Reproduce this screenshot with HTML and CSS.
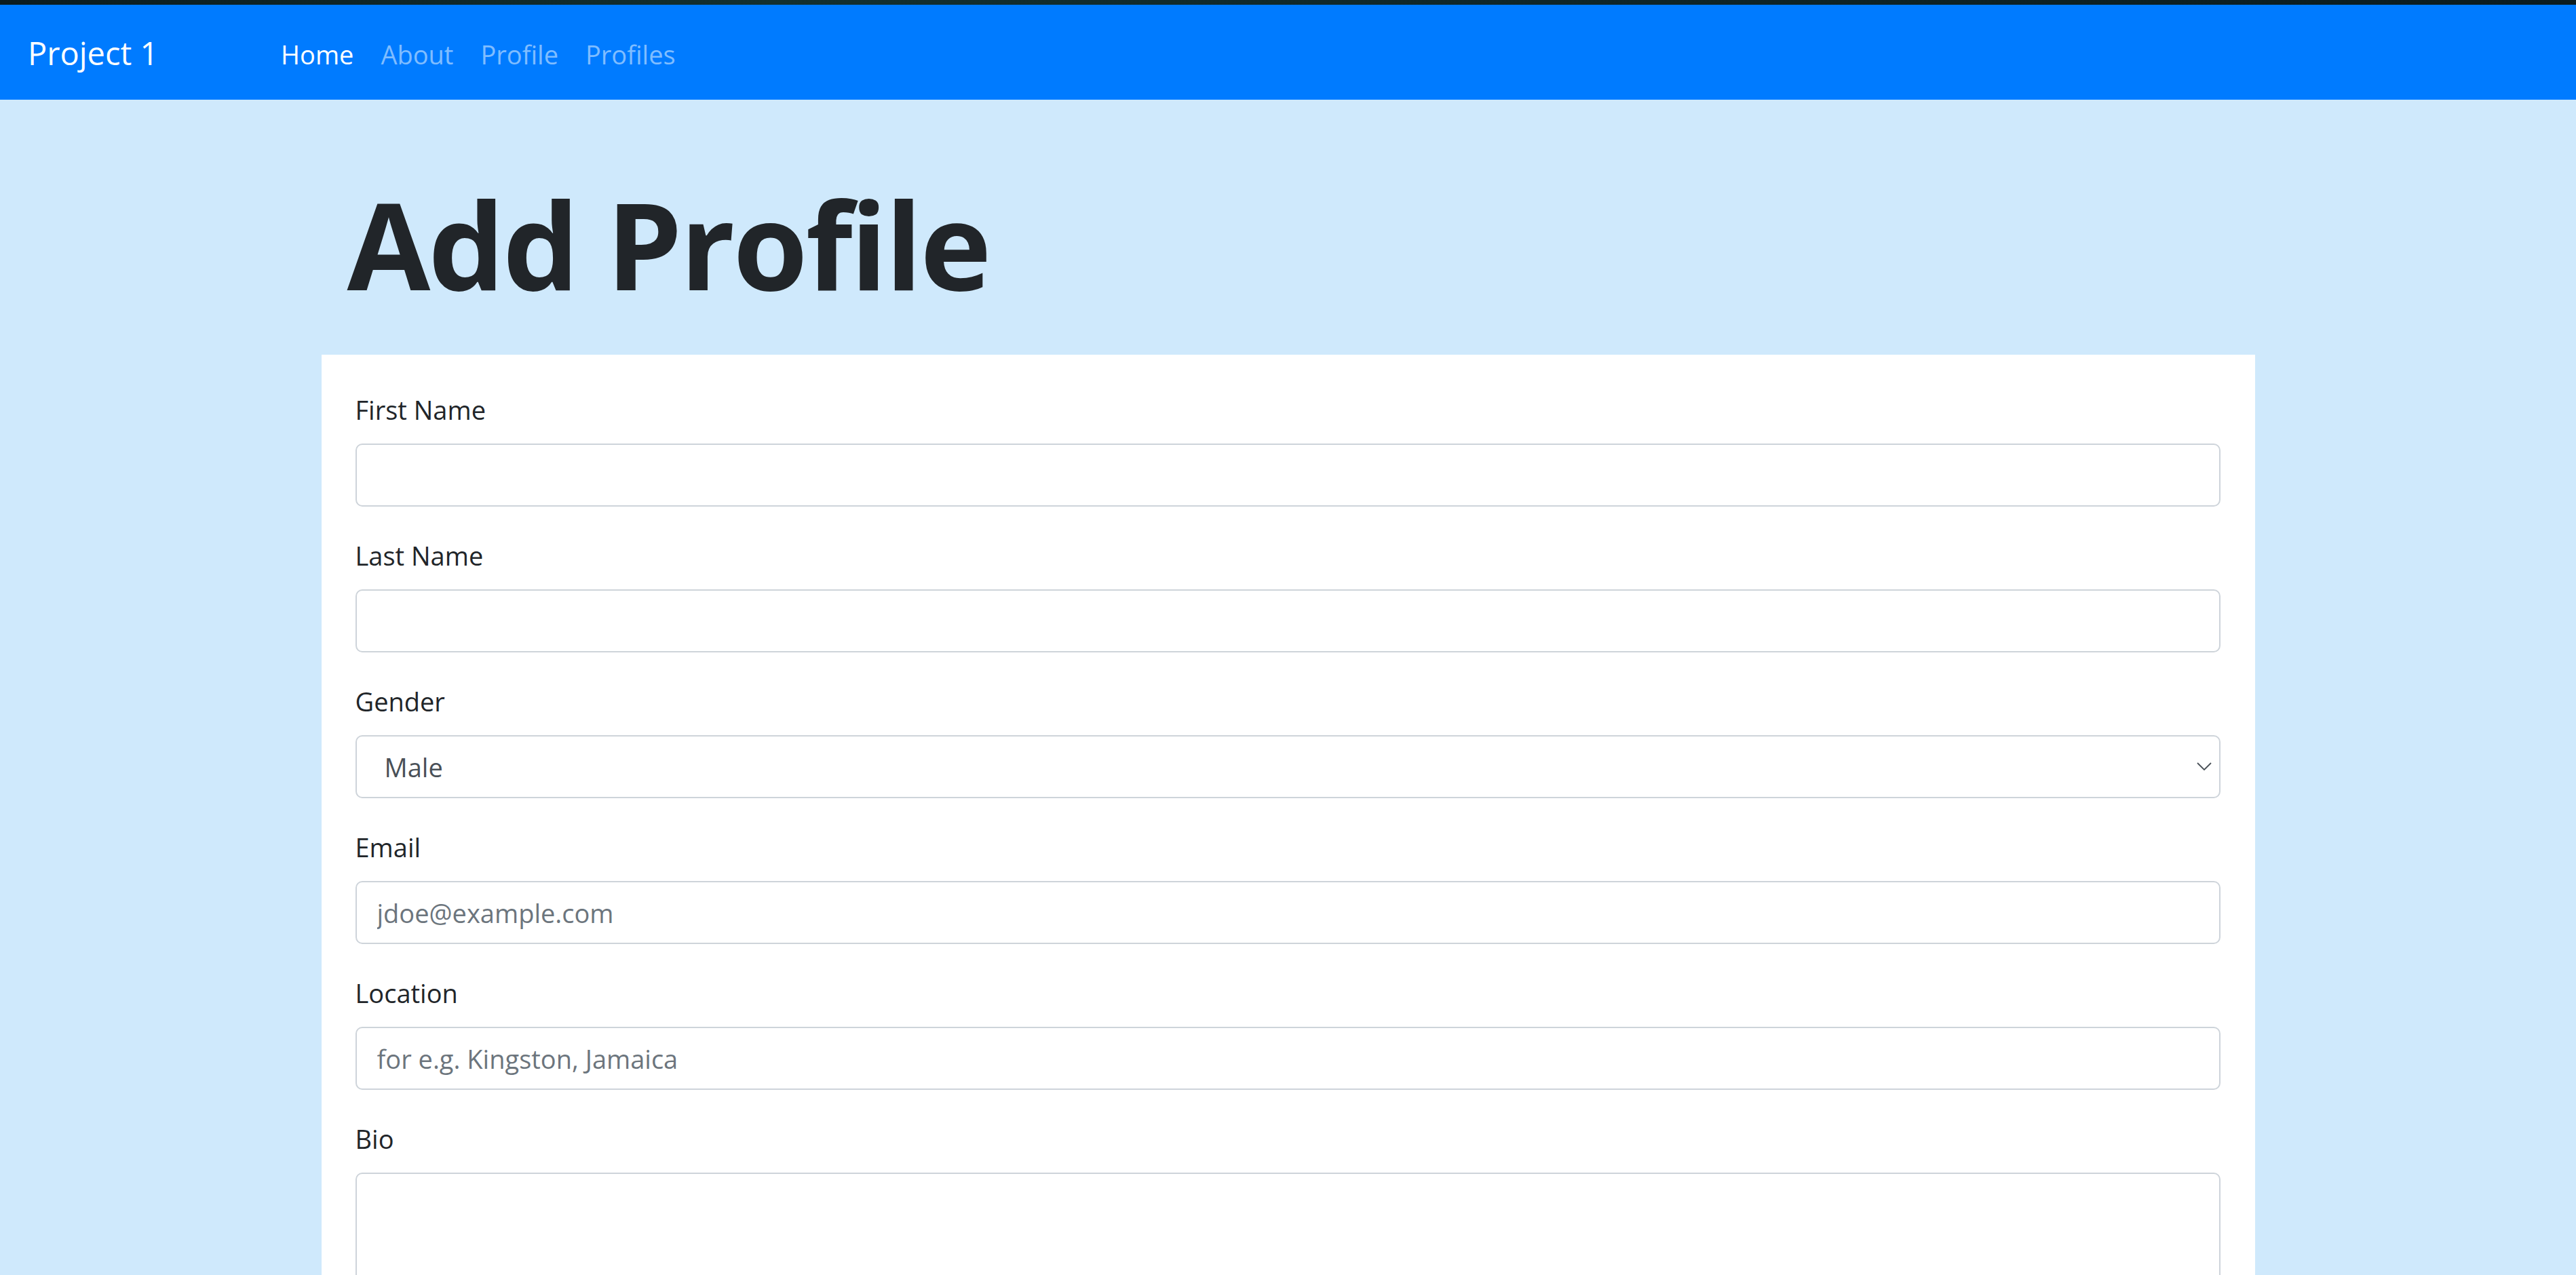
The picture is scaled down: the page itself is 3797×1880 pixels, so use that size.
FILE: index.html
```html
<!DOCTYPE html>
<html lang="en">
<head>
<meta charset="utf-8">
<title>Add Profile</title>
<link rel="stylesheet" href="styles.css">
</head>
<body>
<div class="topstrip"></div>
<nav class="navbar">
  <a class="brand" href="#">Project 1</a>
  <ul class="nav">
    <li><a class="nav-link active" href="#">Home</a></li>
    <li><a class="nav-link" href="#">About</a></li>
    <li><a class="nav-link" href="#">Profile</a></li>
    <li><a class="nav-link" href="#">Profiles</a></li>
  </ul>
</nav>
<main class="container">
  <h1 class="title">Add Profile</h1>
  <form class="card">
    <div class="group">
      <label class="label" for="fname">First Name</label>
      <input class="control" id="fname" type="text">
    </div>
    <div class="group">
      <label class="label" for="lname">Last Name</label>
      <input class="control" id="lname" type="text">
    </div>
    <div class="group">
      <label class="label" for="gender">Gender</label>
      <div class="select-wrap">
        <select class="control select" id="gender">
          <option>Male</option>
          <option>Female</option>
        </select>
        <svg class="chevron" width="22" height="12" viewBox="0 0 22 12" aria-hidden="true"><path d="M1 1 L11 11 L21 1" fill="none" stroke="#495057" stroke-width="1.8"/></svg>
      </div>
    </div>
    <div class="group">
      <label class="label" for="email">Email</label>
      <input class="control" id="email" type="email" placeholder="jdoe@example.com">
    </div>
    <div class="group">
      <label class="label" for="loc">Location</label>
      <input class="control" id="loc" type="text" placeholder="for e.g. Kingston, Jamaica">
    </div>
    <div class="group">
      <label class="label" for="bio">Bio</label>
      <textarea class="control textarea" id="bio"></textarea>
    </div>
  </form>
</main>
</body>
</html>
```
FILE: styles.css
```css
* { box-sizing: border-box; }
html, body {
  margin: 0;
  padding: 0;
}
body {
  background: #cfe9fc;
  font-family: "Open Sans", "Noto Sans", sans-serif;
  color: #212529;
}
.topstrip {
  height: 7px;
  background: linear-gradient(90deg, #0b1c1f, #13302f 30%, #0f2628 60%, #0b1c1f);
}
.navbar {
  height: 140px;
  background: #007bff;
  display: flex;
  align-items: center;
  padding: 5px 0 0 41px;
}
.brand {
  width: 353px;
  font-size: 47px;
  color: #fff;
  text-decoration: none;
  line-height: 1;
  padding-bottom: 2px;
}
.nav {
  display: flex;
  list-style: none;
  margin: 0;
  padding: 0;
}
.nav-link {
  display: block;
  padding: 0 20px;
  font-size: 38px;
  line-height: 1;
  color: rgba(255, 255, 255, 0.5);
  text-decoration: none;
}
.nav-link.active { color: #fff; }
.container {
  width: 2850px;
  margin: 0 auto;
}
.title {
  margin: 104px 0 56px;
  padding-left: 38px;
  font-size: 178px;
  line-height: 216px;
  font-weight: 700;
  color: #212529;
  letter-spacing: -3px;
}
.card {
  background: #fff;
  padding: 53px 51px 60px 50px;
  margin: 0;
}
.group {
  margin-bottom: 44px;
}
.label {
  display: block;
  font-size: 38px;
  line-height: 57px;
  margin-bottom: 21px;
  color: #212529;
}
.control {
  display: block;
  width: 100%;
  height: 93px;
  padding: 0 30px;
  font-family: inherit;
  font-size: 38px;
  color: #495057;
  background: #fff;
  border: 2px solid #ced4da;
  border-radius: 10px;
  outline: none;
}
.control::placeholder { color: #6c757d; }
.select-wrap { position: relative; }
.select {
  appearance: none;
  -webkit-appearance: none;
  padding-left: 41px;
}
.chevron {
  position: absolute;
  right: 13px;
  top: 40px;
}
.textarea {
  height: 230px;
  resize: vertical;
  padding-top: 15px;
}
```
